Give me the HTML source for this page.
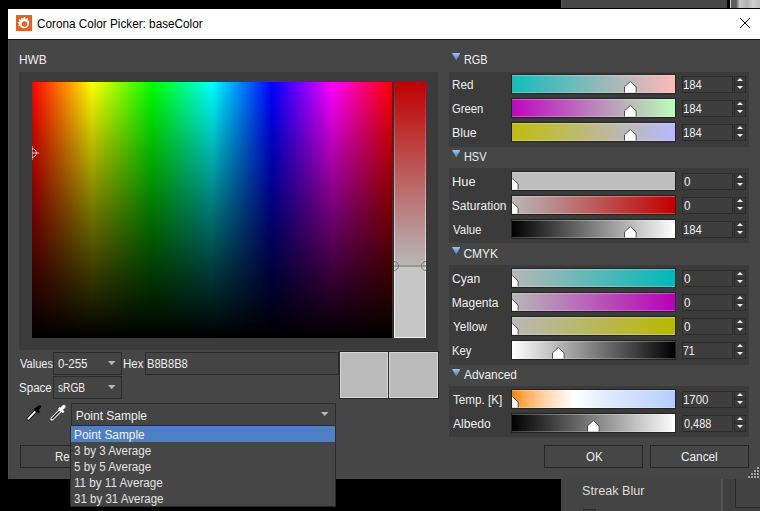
<!DOCTYPE html>
<html><head><meta charset="utf-8"><style>
*{margin:0;padding:0;box-sizing:border-box}
html,body{width:760px;height:511px;overflow:hidden;background:#000}
.a{position:absolute}
.t{font-family:"Liberation Sans", sans-serif;white-space:pre}
</style></head>
<body>
<div class="a" style="left:561px;top:0px;width:166px;height:8px;background:#474747;border-left:1px solid #5a5a5a"></div>
<div class="a" style="left:727px;top:0px;width:3px;height:8px;background:#050505"></div>
<div class="a" style="left:730px;top:0px;width:1px;height:8px;background:#d0d0d0"></div>
<div class="a" style="left:731px;top:0px;width:29px;height:8px;background:linear-gradient(90deg,#5a5a5a,#5c5c5c 18%,#c8c8c8 30%,#b0b0b0 55%,#d0d0d0 75%,#bcbcbc)"></div>
<div class="a" style="left:561px;top:479px;width:160px;height:32px;background:#444444"></div>
<div class="a" style="left:721px;top:479px;width:2px;height:32px;background:#525252"></div>
<div class="a" style="left:723px;top:479px;width:37px;height:32px;background:#3f3f3f"></div>
<div class="a" style="left:735px;top:478px;width:25px;height:30px;border-left:1px solid #2a2a2a;border-bottom:1px solid #2a2a2a;background:#424242"></div>
<div class="a t" style="left:581.90px;top:484.60px;font-size:12px;line-height:12px;color:#dcdcdc;transform:scaleX(1.0517);transform-origin:0 0;">Streak Blur</div>
<div class="a" style="left:583px;top:509px;width:13px;height:2px;border:1px solid #2a2a2a;border-bottom:none;background:#3a3a3a"></div>
<div class="a" style="left:8px;top:9px;width:752px;height:30px;background:#ffffff"></div>
<div class="a" style="left:8px;top:39px;width:752px;height:1px;background:#1a1a1a"></div>
<div class="a" style="left:8px;top:40px;width:752px;height:439px;background:#464646"></div>
<div class="a" style="left:8px;top:40px;width:1px;height:439px;background:#4f4f4f"></div>
<svg class="a" style="left:16px;top:15px" width="16" height="16" viewBox="0 0 16 16">
<rect width="16" height="16" fill="#de6426"/>
<path fill="#fff8ec" d="M1.90 8.20 L1.92 7.67 L1.99 7.14 L3.27 6.93 L3.40 6.52 L3.56 6.13 L2.72 5.15 L3.00 4.70 L3.33 4.28 L4.54 4.74 L4.85 4.45 L5.19 4.19 L4.95 2.92 L5.42 2.67 L5.91 2.47 L6.73 3.47 L7.15 3.37 L7.57 3.32 L8.00 2.10 L8.53 2.12 L9.06 2.19 L9.27 3.47 L9.68 3.60 L10.07 3.76 L11.05 2.92 L11.50 3.20 L11.92 3.53 L11.46 4.74 L11.75 5.05 L12.01 5.39 L13.28 5.15 L12.62 6.04 L12.79 6.46 L12.93 6.88 L13.02 7.31 L13.08 7.76 L13.10 8.20 L13.08 8.64 L13.02 9.09 L12.93 9.52 L12.79 9.94 L12.62 10.36 L12.42 10.75 L12.18 11.13 L11.91 11.48 L11.61 11.81 L11.28 12.11 L10.93 12.38 L10.55 12.62 L10.16 12.82 L9.74 12.99 L9.32 13.13 L8.89 13.22 L8.44 13.28 L8.00 13.30 L7.56 13.28 L7.11 13.22 L6.68 13.13 L6.26 12.99 L5.84 12.82 L5.45 12.62 L5.07 12.38 L4.72 12.11 L4.39 11.81 L4.25 11.35 L3.99 11.01 L2.72 11.25 L2.47 10.78 L2.27 10.29 L3.27 9.47 L3.17 9.05 L3.12 8.63 Z"/>
<circle cx="8.5" cy="9.0" r="2.7" fill="#de6426"/>
</svg>
<div class="a t" style="left:36.97px;top:17.60px;font-size:12px;line-height:12px;color:#000000;transform:scaleX(0.9774);transform-origin:0 0;">Corona Color Picker: baseColor</div>
<svg class="a" style="left:739px;top:17px" width="12" height="12" viewBox="0 0 12 12"><path d="M1 1 L11 11 M11 1 L1 11" stroke="#000" stroke-width="1"/></svg>
<div class="a t" style="left:19.06px;top:53.60px;font-size:12px;line-height:12px;color:#eeeeee;transform:scaleX(0.9885);transform-origin:0 0;">HWB</div>
<div class="a" style="left:19px;top:72px;width:419px;height:278px;background:#3b3b3b"></div>
<div class="a" style="left:32px;top:82px;width:360px;height:256px;background:linear-gradient(180deg,rgba(0,0,0,0) 0%,rgba(0,0,0,0.28) 25%,rgba(0,0,0,0.54) 50%,rgba(0,0,0,0.78) 75%,#000 100%),linear-gradient(90deg,#f00,#ff0 16.667%,#0f0 33.333%,#0ff 50%,#00f 66.667%,#f0f 83.333%,#f00)"></div>
<div class="a" style="left:392px;top:82px;width:2px;height:256px;background:#303030"></div>
<svg class="a" style="left:32px;top:145px;overflow:hidden" width="10" height="16" viewBox="0 0 10 16">
<circle cx="0" cy="8" r="4.3" fill="none" stroke="#f0c8c8" stroke-width="1"/>
<path d="M0 1 V15 M0 8 H7" stroke="#f0c8c8" stroke-width="1"/>
</svg>
<div class="a" style="left:394px;top:82px;width:32px;height:256px;background:linear-gradient(180deg,#c00000 0%,#b8b8b8 72%,#c6c6c6 72.1%,#c6c6c6 100%)"></div>
<div class="a" style="left:394px;top:82px;width:1px;height:256px;background:linear-gradient(180deg,rgba(240,240,240,0) 0%,rgba(240,240,240,0.6) 60%,#f0f0f0 100%)"></div>
<div class="a" style="left:425px;top:82px;width:1px;height:256px;background:linear-gradient(180deg,rgba(240,240,240,0) 0%,rgba(240,240,240,0.6) 60%,#f0f0f0 100%)"></div>
<div class="a" style="left:394px;top:337px;width:32px;height:1px;background:#f0f0f0"></div>
<svg class="a" style="left:394px;top:258px;overflow:hidden" width="32" height="16" viewBox="0 0 32 16">
<path d="M0 8 H32" stroke="#8a8a8a" stroke-width="1.5"/>
<circle cx="0" cy="8" r="4.5" fill="none" stroke="#777" stroke-width="1"/>
<circle cx="32" cy="8" r="4.5" fill="none" stroke="#777" stroke-width="1"/>
</svg>
<div class="a t" style="left:19.75px;top:357.90px;font-size:12px;line-height:12px;color:#eeeeee;transform:scaleX(0.9229);transform-origin:0 0;">Values</div>
<div class="a" style="left:53px;top:352px;width:69px;height:23px;background:#444444;border:1px solid #2b2b2b"></div>
<div class="a t" style="left:57.65px;top:357.90px;font-size:12px;line-height:12px;color:#eeeeee;transform:scaleX(0.9600);transform-origin:0 0;">0-255</div>
<svg class="a" style="left:107.8px;top:360.6px" width="7.5" height="4.2" viewBox="0 0 7.5 4.2"><path d="M0 0 H7.5 L3.75 4.2 Z" fill="#b8b8b8"/></svg>
<div class="a t" style="left:122.99px;top:357.90px;font-size:12px;line-height:12px;color:#eeeeee;transform:scaleX(0.9600);transform-origin:0 0;">Hex</div>
<div class="a" style="left:145px;top:352px;width:194px;height:23px;background:#444444;border:1px solid #2b2b2b"></div>
<div class="a t" style="left:146.72px;top:357.90px;font-size:12px;line-height:12px;color:#eeeeee;transform:scaleX(0.9262);transform-origin:0 0;">B8B8B8</div>
<div class="a t" style="left:18.79px;top:381.90px;font-size:12px;line-height:12px;color:#eeeeee;transform:scaleX(0.9625);transform-origin:0 0;">Space</div>
<div class="a" style="left:53px;top:376px;width:69px;height:23px;background:#444444;border:1px solid #2b2b2b"></div>
<div class="a t" style="left:57.65px;top:381.90px;font-size:12px;line-height:12px;color:#eeeeee;transform:scaleX(0.8484);transform-origin:0 0;">sRGB</div>
<svg class="a" style="left:107.8px;top:384.6px" width="7.5" height="4.2" viewBox="0 0 7.5 4.2"><path d="M0 0 H7.5 L3.75 4.2 Z" fill="#b8b8b8"/></svg>
<div class="a" style="left:339px;top:351px;width:100px;height:48px;background:#262626"></div>
<div class="a" style="left:340px;top:352px;width:48px;height:46px;background:#bababa;border:1px solid #d8d8d8"></div>
<div class="a" style="left:389px;top:352px;width:49px;height:46px;background:#bababa;border:1px solid #d8d8d8"></div>
<svg class="a" style="left:22px;top:400px" width="50" height="25" viewBox="0 0 50 25">
<path d="M6.3 18.8 L13.6 11.2" stroke="#101010" stroke-width="3.6" stroke-linecap="round"/>
<path d="M6.3 18.8 L13.6 11.2" stroke="#f4f4f4" stroke-width="1.9" stroke-linecap="round"/>
<path d="M12.6 8.2 L17.4 12.6" stroke="#000" stroke-width="2.6"/>
<path d="M14 10 L17.6 6.6" stroke="#000" stroke-width="3.2" stroke-linecap="round"/>
<path d="M30 18.9 L37.6 11.2" stroke="#f4f4f4" stroke-width="3.4" stroke-linecap="round"/>
<path d="M30.4 18.5 L37.6 11.2" stroke="#1a1a1a" stroke-width="1.4" stroke-linecap="round"/>
<path d="M36.8 8.0 L41.6 12.4" stroke="#fff" stroke-width="2.6"/>
<path d="M38.6 9.8 L42.0 6.6" stroke="#fff" stroke-width="3.4" stroke-linecap="round"/>
</svg>
<div class="a" style="left:71px;top:403px;width:265px;height:23px;background:#444444;border:1px solid #2b2b2b"></div>
<div class="a t" style="left:75.65px;top:410.40px;font-size:12px;line-height:12px;color:#eeeeee;">Point Sample</div>
<svg class="a" style="left:321px;top:412px" width="7.5" height="4" viewBox="0 0 7.5 4"><path d="M0 0 H7.5 L3.75 4 Z" fill="#b8b8b8"/></svg>
<div class="a" style="left:20px;top:445px;width:100px;height:23px;background:#464646;border:1px solid #262626"></div>
<div class="a t" style="left:54.60px;top:450.80px;font-size:12px;line-height:12px;color:#eeeeee;transform:scaleX(0.9500);transform-origin:0 0;">Reset</div>
<div class="a" style="left:70px;top:426px;width:266px;height:81px;background:#464646;border:1px solid #2a2a2a;border-top:none"></div>
<div class="a" style="left:71px;top:426px;width:264px;height:16px;background:#4e80c8"></div>
<div class="a t" style="left:73.96px;top:428.90px;font-size:12px;line-height:12px;color:#f2f2f2;transform:scaleX(0.9900);transform-origin:0 0;">Point Sample</div>
<div class="a t" style="left:73.98px;top:444.90px;font-size:12px;line-height:12px;color:#e2e2e2;transform:scaleX(0.9671);transform-origin:0 0;">3 by 3 Average</div>
<div class="a t" style="left:73.98px;top:460.90px;font-size:12px;line-height:12px;color:#e2e2e2;transform:scaleX(0.9671);transform-origin:0 0;">5 by 5 Average</div>
<div class="a t" style="left:73.98px;top:476.90px;font-size:12px;line-height:12px;color:#e2e2e2;transform:scaleX(0.9703);transform-origin:0 0;">11 by 11 Average</div>
<div class="a t" style="left:73.99px;top:492.90px;font-size:12px;line-height:12px;color:#e2e2e2;transform:scaleX(0.9598);transform-origin:0 0;">31 by 31 Average</div>
<div class="a" style="left:544px;top:445px;width:99px;height:23px;background:#464646;border:1px solid #262626"></div>
<div class="a t" style="left:585.75px;top:450.60px;font-size:12px;line-height:12px;color:#eeeeee;transform:scaleX(0.9588);transform-origin:0 0;">OK</div>
<div class="a" style="left:650px;top:445px;width:99px;height:23px;background:#464646;border:1px solid #262626"></div>
<div class="a t" style="left:680.67px;top:450.60px;font-size:12px;line-height:12px;color:#eeeeee;transform:scaleX(0.9833);transform-origin:0 0;">Cancel</div>
<div class="a" style="left:757px;top:467px;width:2px;height:2px;background:#a0a0a0"></div>
<div class="a" style="left:754px;top:470px;width:2px;height:2px;background:#a0a0a0"></div>
<div class="a" style="left:757px;top:470px;width:2px;height:2px;background:#a0a0a0"></div>
<div class="a" style="left:751px;top:473px;width:2px;height:2px;background:#a0a0a0"></div>
<div class="a" style="left:754px;top:473px;width:2px;height:2px;background:#a0a0a0"></div>
<div class="a" style="left:757px;top:473px;width:2px;height:2px;background:#a0a0a0"></div>
<div class="a" style="left:748px;top:476px;width:2px;height:2px;background:#a0a0a0"></div>
<div class="a" style="left:751px;top:476px;width:2px;height:2px;background:#a0a0a0"></div>
<div class="a" style="left:754px;top:476px;width:2px;height:2px;background:#a0a0a0"></div>
<div class="a" style="left:757px;top:476px;width:2px;height:2px;background:#a0a0a0"></div>
<svg class="a" style="left:451.7px;top:53.4px" width="8.4" height="7.5" viewBox="0 0 8 7"><defs><linearGradient id="tg" x1="0" y1="0" x2="0" y2="1"><stop offset="0" stop-color="#9cc0f0"/><stop offset="1" stop-color="#4a7cc8"/></linearGradient></defs><path d="M0 0 H8 L4 7 Z" fill="url(#tg)"/></svg>
<div class="a t" style="left:463.54px;top:53.60px;font-size:12px;line-height:12px;color:#eeeeee;transform:scaleX(0.9083);transform-origin:0 0;">RGB</div>
<div class="a" style="left:449px;top:72px;width:300px;height:75px;background:#3b3b3b"></div>
<div class="a t" style="left:451.88px;top:78.60px;font-size:12px;line-height:12px;color:#eeeeee;transform:scaleX(0.9700);transform-origin:0 0;">Red</div>
<div class="a" style="left:511px;top:74px;width:165px;height:20px;background:#222"></div>
<div class="a" style="left:512px;top:75px;width:163px;height:18px;background:linear-gradient(90deg,#14bcbc,#ffb8b8);box-shadow:inset 0 1px 0 rgba(255,255,255,0.3),inset 0 -1px 0 rgba(255,255,255,0.25)"></div>
<svg class="a" style="left:624.1px;top:81px" width="13" height="12" viewBox="0 0 13 12"><path d="M0.5 11.5 V5.9 L6.3 0.5 L12.1 5.9 V11.5" fill="#fff" stroke="#505050" stroke-width="1"/></svg>
<div class="a" style="left:682px;top:76px;width:51px;height:17px;background:#3e3e3e;border:1px solid #2b2b2b"></div>
<div class="a t" style="left:682.91px;top:78.60px;font-size:12px;line-height:12px;color:#eeeeee;transform:scaleX(0.9368);transform-origin:0 0;">184</div>
<div class="a" style="left:734px;top:76px;width:12px;height:9px;background:#3a3a3a;border:1px solid #2b2b2b"></div>
<div class="a" style="left:734px;top:84px;width:12px;height:9px;background:#3a3a3a;border:1px solid #2b2b2b"></div>
<svg class="a" style="left:737px;top:78px" width="6" height="3" viewBox="0 0 6 3"><path d="M0 3 H6 L3 0 Z" fill="#f0f0f0"/></svg>
<svg class="a" style="left:737px;top:86px" width="6" height="3" viewBox="0 0 6 3"><path d="M0 0 H6 L3 3 Z" fill="#f0f0f0"/></svg>
<div class="a t" style="left:451.91px;top:102.60px;font-size:12px;line-height:12px;color:#eeeeee;transform:scaleX(0.9406);transform-origin:0 0;">Green</div>
<div class="a" style="left:511px;top:98px;width:165px;height:20px;background:#222"></div>
<div class="a" style="left:512px;top:99px;width:163px;height:18px;background:linear-gradient(90deg,#be06c0,#b8ffb8);box-shadow:inset 0 1px 0 rgba(255,255,255,0.3),inset 0 -1px 0 rgba(255,255,255,0.25)"></div>
<svg class="a" style="left:624.1px;top:105px" width="13" height="12" viewBox="0 0 13 12"><path d="M0.5 11.5 V5.9 L6.3 0.5 L12.1 5.9 V11.5" fill="#fff" stroke="#505050" stroke-width="1"/></svg>
<div class="a" style="left:682px;top:100px;width:51px;height:17px;background:#3e3e3e;border:1px solid #2b2b2b"></div>
<div class="a t" style="left:682.91px;top:102.60px;font-size:12px;line-height:12px;color:#eeeeee;transform:scaleX(0.9368);transform-origin:0 0;">184</div>
<div class="a" style="left:734px;top:100px;width:12px;height:9px;background:#3a3a3a;border:1px solid #2b2b2b"></div>
<div class="a" style="left:734px;top:108px;width:12px;height:9px;background:#3a3a3a;border:1px solid #2b2b2b"></div>
<svg class="a" style="left:737px;top:102px" width="6" height="3" viewBox="0 0 6 3"><path d="M0 3 H6 L3 0 Z" fill="#f0f0f0"/></svg>
<svg class="a" style="left:737px;top:110px" width="6" height="3" viewBox="0 0 6 3"><path d="M0 0 H6 L3 3 Z" fill="#f0f0f0"/></svg>
<div class="a t" style="left:451.82px;top:126.60px;font-size:12px;line-height:12px;color:#eeeeee;transform:scaleX(1.0273);transform-origin:0 0;">Blue</div>
<div class="a" style="left:511px;top:122px;width:165px;height:20px;background:#222"></div>
<div class="a" style="left:512px;top:123px;width:163px;height:18px;background:linear-gradient(90deg,#c0bc0c,#b8b8ff);box-shadow:inset 0 1px 0 rgba(255,255,255,0.3),inset 0 -1px 0 rgba(255,255,255,0.25)"></div>
<svg class="a" style="left:624.1px;top:129px" width="13" height="12" viewBox="0 0 13 12"><path d="M0.5 11.5 V5.9 L6.3 0.5 L12.1 5.9 V11.5" fill="#fff" stroke="#505050" stroke-width="1"/></svg>
<div class="a" style="left:682px;top:124px;width:51px;height:17px;background:#3e3e3e;border:1px solid #2b2b2b"></div>
<div class="a t" style="left:682.91px;top:126.60px;font-size:12px;line-height:12px;color:#eeeeee;transform:scaleX(0.9368);transform-origin:0 0;">184</div>
<div class="a" style="left:734px;top:124px;width:12px;height:9px;background:#3a3a3a;border:1px solid #2b2b2b"></div>
<div class="a" style="left:734px;top:132px;width:12px;height:9px;background:#3a3a3a;border:1px solid #2b2b2b"></div>
<svg class="a" style="left:737px;top:126px" width="6" height="3" viewBox="0 0 6 3"><path d="M0 3 H6 L3 0 Z" fill="#f0f0f0"/></svg>
<svg class="a" style="left:737px;top:134px" width="6" height="3" viewBox="0 0 6 3"><path d="M0 0 H6 L3 3 Z" fill="#f0f0f0"/></svg>
<svg class="a" style="left:451.7px;top:150.4px" width="8.4" height="7.5" viewBox="0 0 8 7"><defs><linearGradient id="tg" x1="0" y1="0" x2="0" y2="1"><stop offset="0" stop-color="#9cc0f0"/><stop offset="1" stop-color="#4a7cc8"/></linearGradient></defs><path d="M0 0 H8 L4 7 Z" fill="url(#tg)"/></svg>
<div class="a t" style="left:463.54px;top:150.60px;font-size:12px;line-height:12px;color:#eeeeee;transform:scaleX(0.9083);transform-origin:0 0;">HSV</div>
<div class="a" style="left:449px;top:168px;width:300px;height:75px;background:#3b3b3b"></div>
<div class="a t" style="left:451.78px;top:175.60px;font-size:12px;line-height:12px;color:#eeeeee;transform:scaleX(1.0750);transform-origin:0 0;">Hue</div>
<div class="a" style="left:511px;top:171px;width:165px;height:20px;background:#222"></div>
<div class="a" style="left:512px;top:172px;width:163px;height:18px;background:#bebebe;box-shadow:inset 0 1px 0 rgba(255,255,255,0.3),inset 0 -1px 0 rgba(255,255,255,0.25)"></div>
<div class="a" style="left:512px;top:172px;width:10px;height:18px;overflow:hidden"><svg class="a" style="left:-6.3px;top:6px" width="13" height="12" viewBox="0 0 13 12"><path d="M0.5 11.5 V5.9 L6.3 0.5 L12.1 5.9 V11.5" fill="#fff" stroke="#505050" stroke-width="1"/></svg></div>
<div class="a" style="left:682px;top:173px;width:51px;height:17px;background:#3e3e3e;border:1px solid #2b2b2b"></div>
<div class="a t" style="left:683.85px;top:175.60px;font-size:12px;line-height:12px;color:#eeeeee;transform:scaleX(0.9667);transform-origin:0 0;">0</div>
<div class="a" style="left:734px;top:173px;width:12px;height:9px;background:#3a3a3a;border:1px solid #2b2b2b"></div>
<div class="a" style="left:734px;top:181px;width:12px;height:9px;background:#3a3a3a;border:1px solid #2b2b2b"></div>
<svg class="a" style="left:737px;top:175px" width="6" height="3" viewBox="0 0 6 3"><path d="M0 3 H6 L3 0 Z" fill="#f0f0f0"/></svg>
<svg class="a" style="left:737px;top:183px" width="6" height="3" viewBox="0 0 6 3"><path d="M0 0 H6 L3 3 Z" fill="#f0f0f0"/></svg>
<div class="a t" style="left:451.85px;top:199.60px;font-size:12px;line-height:12px;color:#eeeeee;">Saturation</div>
<div class="a" style="left:511px;top:195px;width:165px;height:20px;background:#222"></div>
<div class="a" style="left:512px;top:196px;width:163px;height:18px;background:linear-gradient(90deg,#b8b8b8,#c00000);box-shadow:inset 0 1px 0 rgba(255,255,255,0.3),inset 0 -1px 0 rgba(255,255,255,0.25)"></div>
<div class="a" style="left:512px;top:196px;width:10px;height:18px;overflow:hidden"><svg class="a" style="left:-6.3px;top:6px" width="13" height="12" viewBox="0 0 13 12"><path d="M0.5 11.5 V5.9 L6.3 0.5 L12.1 5.9 V11.5" fill="#fff" stroke="#505050" stroke-width="1"/></svg></div>
<div class="a" style="left:682px;top:197px;width:51px;height:17px;background:#3e3e3e;border:1px solid #2b2b2b"></div>
<div class="a t" style="left:683.85px;top:199.60px;font-size:12px;line-height:12px;color:#eeeeee;transform:scaleX(0.9667);transform-origin:0 0;">0</div>
<div class="a" style="left:734px;top:197px;width:12px;height:9px;background:#3a3a3a;border:1px solid #2b2b2b"></div>
<div class="a" style="left:734px;top:205px;width:12px;height:9px;background:#3a3a3a;border:1px solid #2b2b2b"></div>
<svg class="a" style="left:737px;top:199px" width="6" height="3" viewBox="0 0 6 3"><path d="M0 3 H6 L3 0 Z" fill="#f0f0f0"/></svg>
<svg class="a" style="left:737px;top:207px" width="6" height="3" viewBox="0 0 6 3"><path d="M0 0 H6 L3 3 Z" fill="#f0f0f0"/></svg>
<div class="a t" style="left:452.85px;top:223.60px;font-size:12px;line-height:12px;color:#eeeeee;transform:scaleX(0.9552);transform-origin:0 0;">Value</div>
<div class="a" style="left:511px;top:219px;width:165px;height:20px;background:#222"></div>
<div class="a" style="left:512px;top:220px;width:163px;height:18px;background:linear-gradient(90deg,#000,#fff);box-shadow:inset 0 1px 0 rgba(255,255,255,0.3),inset 0 -1px 0 rgba(255,255,255,0.25)"></div>
<svg class="a" style="left:624.1px;top:226px" width="13" height="12" viewBox="0 0 13 12"><path d="M0.5 11.5 V5.9 L6.3 0.5 L12.1 5.9 V11.5" fill="#fff" stroke="#505050" stroke-width="1"/></svg>
<div class="a" style="left:682px;top:221px;width:51px;height:17px;background:#3e3e3e;border:1px solid #2b2b2b"></div>
<div class="a t" style="left:682.91px;top:223.60px;font-size:12px;line-height:12px;color:#eeeeee;transform:scaleX(0.9368);transform-origin:0 0;">184</div>
<div class="a" style="left:734px;top:221px;width:12px;height:9px;background:#3a3a3a;border:1px solid #2b2b2b"></div>
<div class="a" style="left:734px;top:229px;width:12px;height:9px;background:#3a3a3a;border:1px solid #2b2b2b"></div>
<svg class="a" style="left:737px;top:223px" width="6" height="3" viewBox="0 0 6 3"><path d="M0 3 H6 L3 0 Z" fill="#f0f0f0"/></svg>
<svg class="a" style="left:737px;top:231px" width="6" height="3" viewBox="0 0 6 3"><path d="M0 0 H6 L3 3 Z" fill="#f0f0f0"/></svg>
<svg class="a" style="left:451.7px;top:247.4px" width="8.4" height="7.5" viewBox="0 0 8 7"><defs><linearGradient id="tg" x1="0" y1="0" x2="0" y2="1"><stop offset="0" stop-color="#9cc0f0"/><stop offset="1" stop-color="#4a7cc8"/></linearGradient></defs><path d="M0 0 H8 L4 7 Z" fill="url(#tg)"/></svg>
<div class="a t" style="left:463.45px;top:247.60px;font-size:12px;line-height:12px;color:#eeeeee;">CMYK</div>
<div class="a" style="left:449px;top:265px;width:300px;height:100px;background:#3b3b3b"></div>
<div class="a t" style="left:451.84px;top:272.60px;font-size:12px;line-height:12px;color:#eeeeee;transform:scaleX(1.0077);transform-origin:0 0;">Cyan</div>
<div class="a" style="left:511px;top:268px;width:165px;height:20px;background:#222"></div>
<div class="a" style="left:512px;top:269px;width:163px;height:18px;background:linear-gradient(90deg,#b8b8b8,#00b8b8);box-shadow:inset 0 1px 0 rgba(255,255,255,0.3),inset 0 -1px 0 rgba(255,255,255,0.25)"></div>
<div class="a" style="left:512px;top:269px;width:10px;height:18px;overflow:hidden"><svg class="a" style="left:-6.3px;top:6px" width="13" height="12" viewBox="0 0 13 12"><path d="M0.5 11.5 V5.9 L6.3 0.5 L12.1 5.9 V11.5" fill="#fff" stroke="#505050" stroke-width="1"/></svg></div>
<div class="a" style="left:682px;top:270px;width:51px;height:17px;background:#3e3e3e;border:1px solid #2b2b2b"></div>
<div class="a t" style="left:683.85px;top:272.60px;font-size:12px;line-height:12px;color:#eeeeee;transform:scaleX(0.9667);transform-origin:0 0;">0</div>
<div class="a" style="left:734px;top:270px;width:12px;height:9px;background:#3a3a3a;border:1px solid #2b2b2b"></div>
<div class="a" style="left:734px;top:278px;width:12px;height:9px;background:#3a3a3a;border:1px solid #2b2b2b"></div>
<svg class="a" style="left:737px;top:272px" width="6" height="3" viewBox="0 0 6 3"><path d="M0 3 H6 L3 0 Z" fill="#f0f0f0"/></svg>
<svg class="a" style="left:737px;top:280px" width="6" height="3" viewBox="0 0 6 3"><path d="M0 0 H6 L3 3 Z" fill="#f0f0f0"/></svg>
<div class="a t" style="left:451.85px;top:296.60px;font-size:12px;line-height:12px;color:#eeeeee;">Magenta</div>
<div class="a" style="left:511px;top:292px;width:165px;height:20px;background:#222"></div>
<div class="a" style="left:512px;top:293px;width:163px;height:18px;background:linear-gradient(90deg,#b8b8b8,#b800b8);box-shadow:inset 0 1px 0 rgba(255,255,255,0.3),inset 0 -1px 0 rgba(255,255,255,0.25)"></div>
<div class="a" style="left:512px;top:293px;width:10px;height:18px;overflow:hidden"><svg class="a" style="left:-6.3px;top:6px" width="13" height="12" viewBox="0 0 13 12"><path d="M0.5 11.5 V5.9 L6.3 0.5 L12.1 5.9 V11.5" fill="#fff" stroke="#505050" stroke-width="1"/></svg></div>
<div class="a" style="left:682px;top:294px;width:51px;height:17px;background:#3e3e3e;border:1px solid #2b2b2b"></div>
<div class="a t" style="left:683.85px;top:296.60px;font-size:12px;line-height:12px;color:#eeeeee;transform:scaleX(0.9667);transform-origin:0 0;">0</div>
<div class="a" style="left:734px;top:294px;width:12px;height:9px;background:#3a3a3a;border:1px solid #2b2b2b"></div>
<div class="a" style="left:734px;top:302px;width:12px;height:9px;background:#3a3a3a;border:1px solid #2b2b2b"></div>
<svg class="a" style="left:737px;top:296px" width="6" height="3" viewBox="0 0 6 3"><path d="M0 3 H6 L3 0 Z" fill="#f0f0f0"/></svg>
<svg class="a" style="left:737px;top:304px" width="6" height="3" viewBox="0 0 6 3"><path d="M0 0 H6 L3 3 Z" fill="#f0f0f0"/></svg>
<div class="a t" style="left:452.85px;top:320.60px;font-size:12px;line-height:12px;color:#eeeeee;transform:scaleX(0.9882);transform-origin:0 0;">Yellow</div>
<div class="a" style="left:511px;top:316px;width:165px;height:20px;background:#222"></div>
<div class="a" style="left:512px;top:317px;width:163px;height:18px;background:linear-gradient(90deg,#b8b8b8,#b8b800);box-shadow:inset 0 1px 0 rgba(255,255,255,0.3),inset 0 -1px 0 rgba(255,255,255,0.25)"></div>
<div class="a" style="left:512px;top:317px;width:10px;height:18px;overflow:hidden"><svg class="a" style="left:-6.3px;top:6px" width="13" height="12" viewBox="0 0 13 12"><path d="M0.5 11.5 V5.9 L6.3 0.5 L12.1 5.9 V11.5" fill="#fff" stroke="#505050" stroke-width="1"/></svg></div>
<div class="a" style="left:682px;top:318px;width:51px;height:17px;background:#3e3e3e;border:1px solid #2b2b2b"></div>
<div class="a t" style="left:683.85px;top:320.60px;font-size:12px;line-height:12px;color:#eeeeee;transform:scaleX(0.9667);transform-origin:0 0;">0</div>
<div class="a" style="left:734px;top:318px;width:12px;height:9px;background:#3a3a3a;border:1px solid #2b2b2b"></div>
<div class="a" style="left:734px;top:326px;width:12px;height:9px;background:#3a3a3a;border:1px solid #2b2b2b"></div>
<svg class="a" style="left:737px;top:320px" width="6" height="3" viewBox="0 0 6 3"><path d="M0 3 H6 L3 0 Z" fill="#f0f0f0"/></svg>
<svg class="a" style="left:737px;top:328px" width="6" height="3" viewBox="0 0 6 3"><path d="M0 0 H6 L3 3 Z" fill="#f0f0f0"/></svg>
<div class="a t" style="left:451.91px;top:344.60px;font-size:12px;line-height:12px;color:#eeeeee;transform:scaleX(0.9400);transform-origin:0 0;">Key</div>
<div class="a" style="left:511px;top:340px;width:165px;height:20px;background:#222"></div>
<div class="a" style="left:512px;top:341px;width:163px;height:18px;background:linear-gradient(90deg,#fff,#000);box-shadow:inset 0 1px 0 rgba(255,255,255,0.3),inset 0 -1px 0 rgba(255,255,255,0.25)"></div>
<svg class="a" style="left:551.9px;top:347px" width="13" height="12" viewBox="0 0 13 12"><path d="M0.5 11.5 V5.9 L6.3 0.5 L12.1 5.9 V11.5" fill="#fff" stroke="#505050" stroke-width="1"/></svg>
<div class="a" style="left:682px;top:342px;width:51px;height:17px;background:#3e3e3e;border:1px solid #2b2b2b"></div>
<div class="a t" style="left:682.98px;top:344.60px;font-size:12px;line-height:12px;color:#eeeeee;transform:scaleX(0.8750);transform-origin:0 0;">71</div>
<div class="a" style="left:734px;top:342px;width:12px;height:9px;background:#3a3a3a;border:1px solid #2b2b2b"></div>
<div class="a" style="left:734px;top:350px;width:12px;height:9px;background:#3a3a3a;border:1px solid #2b2b2b"></div>
<svg class="a" style="left:737px;top:344px" width="6" height="3" viewBox="0 0 6 3"><path d="M0 3 H6 L3 0 Z" fill="#f0f0f0"/></svg>
<svg class="a" style="left:737px;top:352px" width="6" height="3" viewBox="0 0 6 3"><path d="M0 0 H6 L3 3 Z" fill="#f0f0f0"/></svg>
<svg class="a" style="left:451.7px;top:369.09999999999997px" width="8.4" height="7.5" viewBox="0 0 8 7"><defs><linearGradient id="tg" x1="0" y1="0" x2="0" y2="1"><stop offset="0" stop-color="#9cc0f0"/><stop offset="1" stop-color="#4a7cc8"/></linearGradient></defs><path d="M0 0 H8 L4 7 Z" fill="url(#tg)"/></svg>
<div class="a t" style="left:464.45px;top:369.30px;font-size:12px;line-height:12px;color:#eeeeee;transform:scaleX(0.9906);transform-origin:0 0;">Advanced</div>
<div class="a" style="left:449px;top:386px;width:300px;height:51px;background:#3b3b3b"></div>
<div class="a t" style="left:452.85px;top:393.60px;font-size:12px;line-height:12px;color:#eeeeee;transform:scaleX(0.9740);transform-origin:0 0;">Temp. [K]</div>
<div class="a" style="left:511px;top:389px;width:165px;height:20px;background:#222"></div>
<div class="a" style="left:512px;top:390px;width:163px;height:18px;background:linear-gradient(90deg,#ff8000 0%,#ffa850 7%,#ffd4a8 20%,#fff 38%,#e4ecff 55%,#b4cdff 100%);box-shadow:inset 0 1px 0 rgba(255,255,255,0.3),inset 0 -1px 0 rgba(255,255,255,0.25)"></div>
<div class="a" style="left:512px;top:390px;width:10px;height:18px;overflow:hidden"><svg class="a" style="left:-6.3px;top:6px" width="13" height="12" viewBox="0 0 13 12"><path d="M0.5 11.5 V5.9 L6.3 0.5 L12.1 5.9 V11.5" fill="#fff" stroke="#505050" stroke-width="1"/></svg></div>
<div class="a" style="left:682px;top:391px;width:51px;height:17px;background:#3e3e3e;border:1px solid #2b2b2b"></div>
<div class="a t" style="left:682.90px;top:393.60px;font-size:12px;line-height:12px;color:#eeeeee;transform:scaleX(0.9520);transform-origin:0 0;">1700</div>
<div class="a" style="left:734px;top:391px;width:12px;height:9px;background:#3a3a3a;border:1px solid #2b2b2b"></div>
<div class="a" style="left:734px;top:399px;width:12px;height:9px;background:#3a3a3a;border:1px solid #2b2b2b"></div>
<svg class="a" style="left:737px;top:393px" width="6" height="3" viewBox="0 0 6 3"><path d="M0 3 H6 L3 0 Z" fill="#f0f0f0"/></svg>
<svg class="a" style="left:737px;top:401px" width="6" height="3" viewBox="0 0 6 3"><path d="M0 0 H6 L3 3 Z" fill="#f0f0f0"/></svg>
<div class="a t" style="left:452.85px;top:417.60px;font-size:12px;line-height:12px;color:#eeeeee;transform:scaleX(1.0135);transform-origin:0 0;">Albedo</div>
<div class="a" style="left:511px;top:413px;width:165px;height:20px;background:#222"></div>
<div class="a" style="left:512px;top:414px;width:163px;height:18px;background:linear-gradient(90deg,#000,#fff);box-shadow:inset 0 1px 0 rgba(255,255,255,0.3),inset 0 -1px 0 rgba(255,255,255,0.25)"></div>
<svg class="a" style="left:587.0px;top:420px" width="13" height="12" viewBox="0 0 13 12"><path d="M0.5 11.5 V5.9 L6.3 0.5 L12.1 5.9 V11.5" fill="#fff" stroke="#505050" stroke-width="1"/></svg>
<div class="a" style="left:682px;top:415px;width:51px;height:17px;background:#3e3e3e;border:1px solid #2b2b2b"></div>
<div class="a t" style="left:683.85px;top:417.60px;font-size:12px;line-height:12px;color:#eeeeee;transform:scaleX(0.9103);transform-origin:0 0;">0,488</div>
<div class="a" style="left:734px;top:415px;width:12px;height:9px;background:#3a3a3a;border:1px solid #2b2b2b"></div>
<div class="a" style="left:734px;top:423px;width:12px;height:9px;background:#3a3a3a;border:1px solid #2b2b2b"></div>
<svg class="a" style="left:737px;top:417px" width="6" height="3" viewBox="0 0 6 3"><path d="M0 3 H6 L3 0 Z" fill="#f0f0f0"/></svg>
<svg class="a" style="left:737px;top:425px" width="6" height="3" viewBox="0 0 6 3"><path d="M0 0 H6 L3 3 Z" fill="#f0f0f0"/></svg>
</body></html>
